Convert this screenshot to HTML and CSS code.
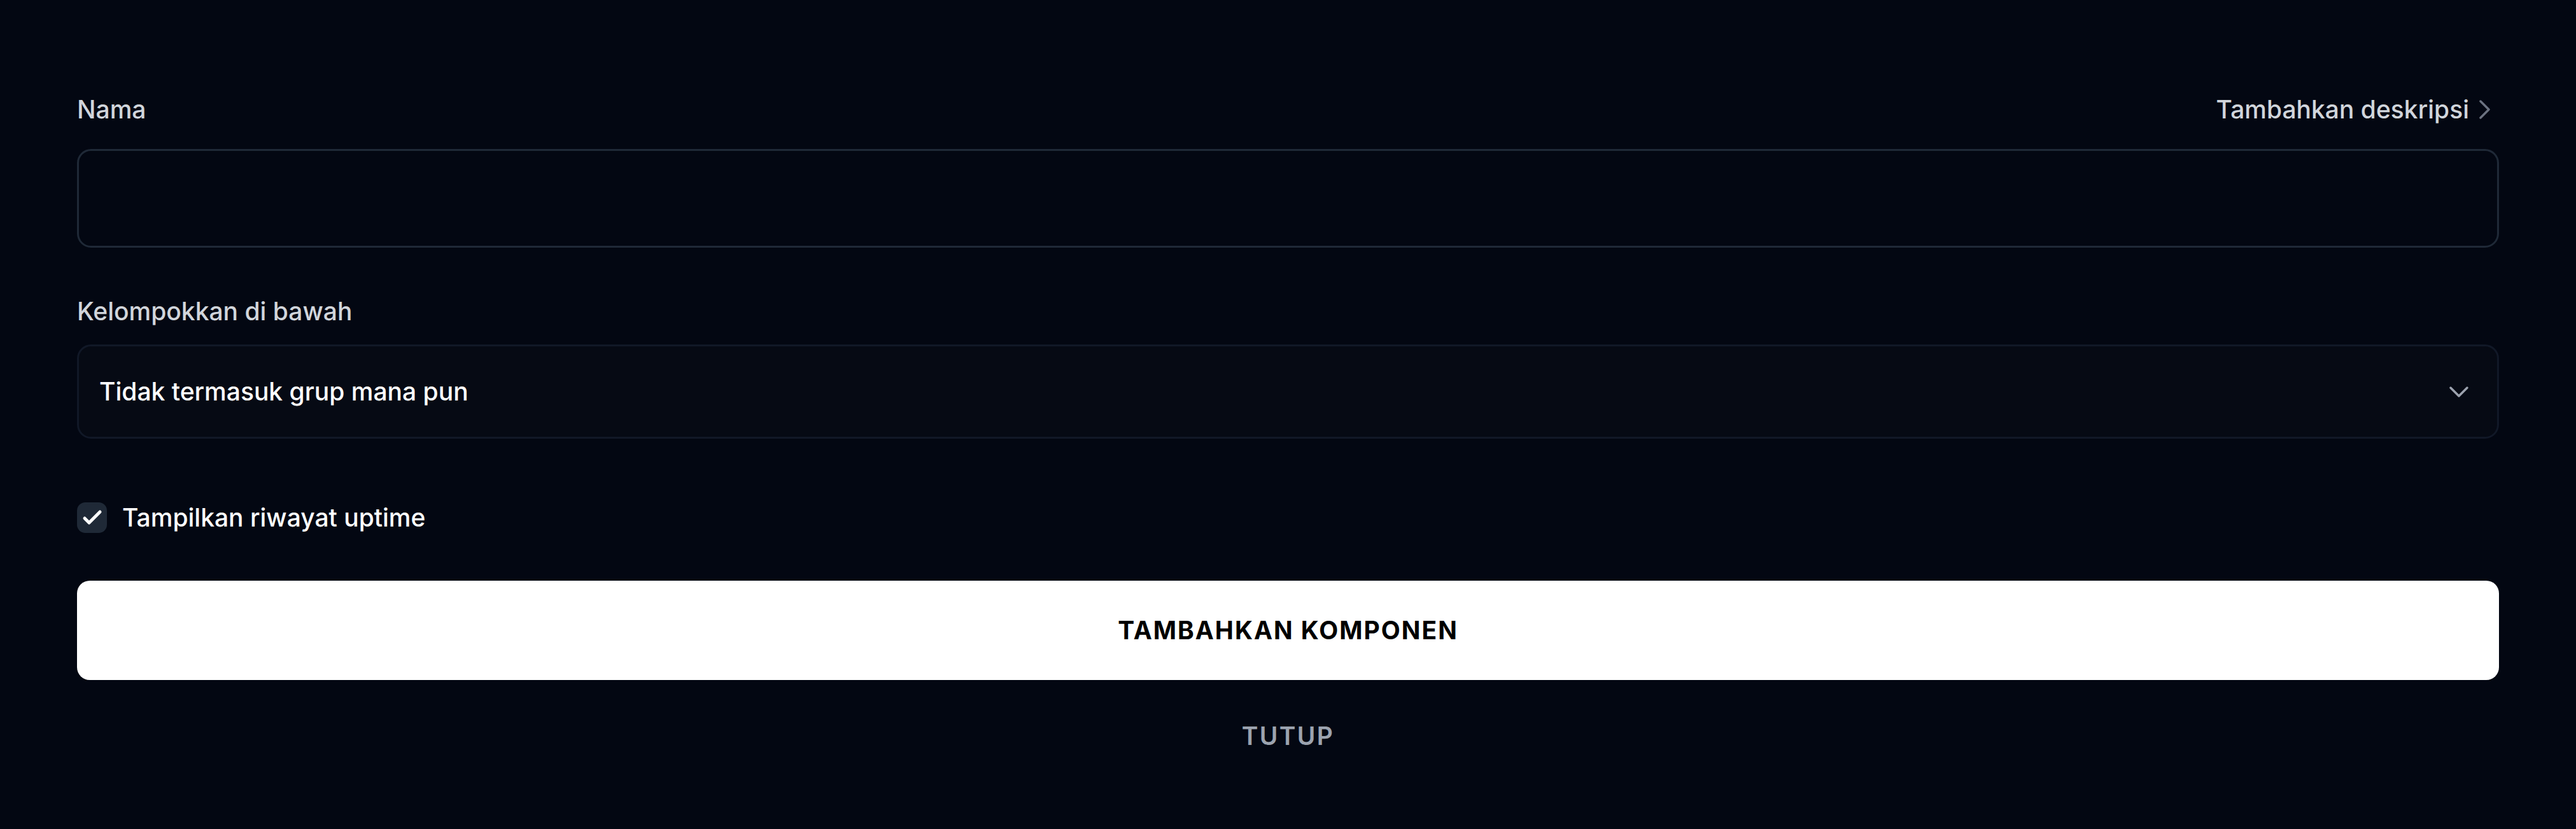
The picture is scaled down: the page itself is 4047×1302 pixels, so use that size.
FILE: index.html
```html
<!DOCTYPE html>
<html lang="id">
<head>
<meta charset="utf-8">
<title>Tambahkan komponen</title>
<link rel="stylesheet" href="styles.css">
</head>
<body>
<form class="form">
  <div class="field-head">
    <label class="label" for="nama">Nama</label>
    <button type="button" class="desc-link">Tambahkan deskripsi
      <svg class="desc-chevron" viewBox="0 0 17 30" width="17" height="30" aria-hidden="true"><path d="M2 2 L15 15 L2 28" fill="none" stroke="currentColor" stroke-width="3.5" stroke-linecap="round" stroke-linejoin="round"/></svg>
    </button>
  </div>
  <input id="nama" class="text-input" type="text">

  <label class="label label-group">Kelompokkan di bawah</label>
  <div class="select">
    <span class="select-value">Tidak termasuk grup mana pun</span>
    <svg class="select-chevron" viewBox="0 0 32 19" width="32" height="19" aria-hidden="true"><path d="M3 3 L16 16 L29 3" fill="none" stroke="currentColor" stroke-width="3.5" stroke-linecap="round" stroke-linejoin="round"/></svg>
  </div>

  <label class="check-row">
    <span class="checkbox">
      <svg viewBox="0 0 47 48" width="47" height="48" aria-hidden="true"><path d="M12 25 L19 32 L36 15" fill="none" stroke="#ffffff" stroke-width="5" stroke-linecap="round" stroke-linejoin="round"/></svg>
    </span>
    <span class="check-text">Tampilkan riwayat uptime</span>
  </label>

  <button type="button" class="primary">TAMBAHKAN KOMPONEN</button>
  <button type="button" class="secondary">TUTUP</button>
</form>
</body>
</html>
```

FILE: styles.css
```css
* { box-sizing: border-box; }

html, body {
  margin: 0;
  padding: 0;
  background: #030712;
}

body {
  font-family: Inter, "Noto Sans", "Liberation Sans", sans-serif;
  font-size: 39px;
  line-height: 58px;
  color: #d1d5db;
}

.form {
  display: flex;
  flex-direction: column;
  padding: 143px 121px 0 121px;
}

.field-head {
  display: flex;
  justify-content: space-between;
  align-items: center;
  height: 58px;
  margin-bottom: 33px;
}

.label {
  font-weight: 500;
  color: #d1d5db;
  display: block;
}

.desc-link {
  display: flex;
  align-items: center;
  gap: 16px;
  background: none;
  border: 0;
  padding: 0;
  margin-right: 14px;
  font: inherit;
  font-weight: 500;
  color: #d1d5db;
  cursor: pointer;
}

.desc-chevron {
  color: #6b7280;
  display: block;
}

.text-input {
  display: block;
  width: 100%;
  height: 155px;
  background: transparent;
  border: 3px solid #1f2937;
  border-radius: 22px;
  outline: none;
  font: inherit;
  color: #ffffff;
  padding: 0 32px;
}

.label-group {
  margin-top: 71px;
  margin-bottom: 23px;
}

.select {
  display: flex;
  align-items: center;
  justify-content: space-between;
  height: 148px;
  background: #060a14;
  border: 3px solid #111827;
  border-radius: 22px;
  padding: 0 44px 0 32px;
}

.select-value {
  color: #ffffff;
  font-weight: 500;
}

.select-chevron {
  color: #9ca3af;
  display: block;
}

.check-row {
  display: flex;
  align-items: center;
  gap: 24px;
  margin-top: 100px;
  height: 48px;
}

.checkbox {
  width: 47px;
  height: 48px;
  border-radius: 13px;
  background: #1f2937;
  display: flex;
  align-items: center;
  justify-content: center;
}

.checkbox svg { display: block; }

.check-text {
  color: #ffffff;
  font-weight: 500;
}

.primary {
  margin-top: 75px;
  height: 156px;
  width: 100%;
  background: #ffffff;
  border: 0;
  border-radius: 20px;
  font: inherit;
  font-weight: 700;
  letter-spacing: 0.05em;
  color: #000000;
  cursor: pointer;
}

.secondary {
  margin-top: 59px;
  align-self: center;
  background: none;
  border: 0;
  padding: 0;
  font: inherit;
  font-weight: 600;
  letter-spacing: 0.06em;
  color: #9ca3af;
  cursor: pointer;
}
```
